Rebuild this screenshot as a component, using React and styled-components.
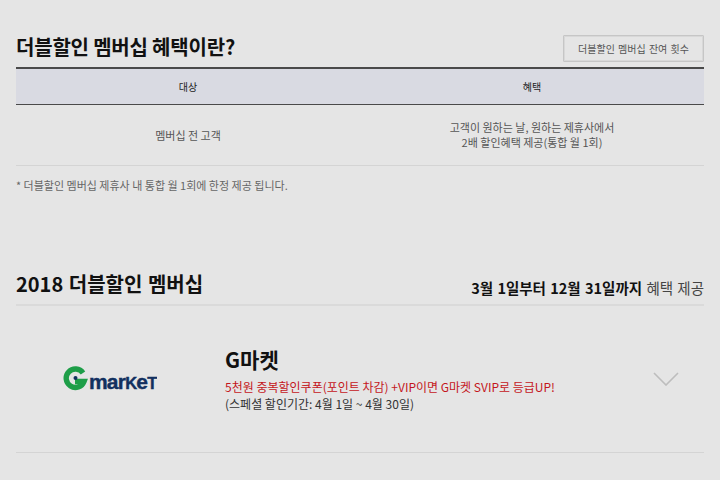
import React from 'react';
import styled, { createGlobalStyle } from 'styled-components';

const GlobalStyle = createGlobalStyle`
  html, body {
    margin: 0;
    padding: 0;
    background: #e5e5e5;
    overflow: hidden;
  }
  body {
    font-family: 'Noto Sans CJK KR', 'Liberation Sans', sans-serif;
  }
`;

const Page = styled.div`
  width: 688px;
  height: 480px;
  padding: 0 16px;
  overflow: hidden;
`;

const TitleRow = styled.div`
  display: flex;
  justify-content: space-between;
  align-items: flex-end;
  height: 62px;
  margin-bottom: 5px;
`;

const Title = styled.h2`
  margin: 0 0 2px;
  font-size: 20px;
  line-height: 26px;
  font-weight: 700;
  color: #111;
  letter-spacing: -0.2px;
`;

const OutlineButton = styled.button`
  box-sizing: border-box;
  width: 141px;
  height: 27px;
  padding: 0;
  background: #e5e5e5;
  border: 1px solid #c6c6c6;
  border-radius: 1px;
  box-shadow: inset 0 0 0 1px #d8d8d8;
  color: #555;
  font-family: inherit;
  font-size: 10px;
  word-spacing: 1px;
`;

const Table = styled.div`
  display: grid;
  grid-template-columns: 344px 344px;
  border-top: 2px solid #4a4a4a;
`;

const HeadCell = styled.div`
  height: 35px;
  display: flex;
  align-items: center;
  justify-content: center;
  background: #d9dae2;
  border-bottom: 1px solid #4a4a4a;
  font-size: 10px;
  color: #222;
`;

const BodyCell = styled.div`
  height: 60px;
  display: flex;
  align-items: center;
  justify-content: center;
  text-align: center;
  border-bottom: 1px solid #d4d4d4;
  font-size: 11px;
  line-height: 15px;
  color: #555;
`;

const Note = styled.p`
  margin: 12px 0 0;
  font-size: 11px;
  line-height: 15px;
  color: #666;
`;

const SectionRow = styled.div`
  display: flex;
  justify-content: space-between;
  align-items: center;
  margin-top: 70px;
  height: 41px;
  border-bottom: 2px solid #dadada;
`;

const SectionTitle = styled.h3`
  margin: 0;
  font-size: 20px;
  font-weight: 700;
  word-spacing: 1px;
  color: #111;
  line-height: 26px;
`;

const Period = styled.div`
  font-size: 14.5px;
  word-spacing: 1px;
  color: #444;
  margin-top: 7px;
  strong {
    color: #111;
    font-weight: 700;
  }
`;

const Partner = styled.div`
  display: flex;
  align-items: center;
  height: 146px;
  border-bottom: 1px solid #d4d4d4;
`;

const LogoBox = styled.div`
  width: 188px;
  margin-right: 21px;
  display: flex;
  justify-content: center;
  flex: none;
`;

const PartnerInfo = styled.div`
  flex: 1;
  padding-bottom: 2px;
`;

const PartnerName = styled.div`
  font-size: 21px;
  line-height: 28px;
  font-weight: 700;
  color: #111;
  margin-bottom: 5px;
`;

const Promo = styled.div`
  font-size: 12px;
  line-height: 17px;
  color: #c4161c;
`;

const Dates = styled.div`
  font-size: 12px;
  line-height: 17px;
  color: #333;
`;

const ChevronBox = styled.div`
  width: 76px;
  flex: none;
  display: flex;
  justify-content: center;
`;

function GmarketLogo() {
  return (
    <svg width="94" height="36" viewBox="0 -6 94 36">
      <path
        d="M20 6 A9.2 9.2 0 1 0 21 14.5 L12 14.5"
        fill="none"
        stroke="#1e9e48"
        strokeWidth="5.4"
      />
      <circle cx="12.5" cy="11" r="2" fill="#12305f" />
      <text
        x="26"
        y="22"
        fontFamily="'Liberation Sans', sans-serif"
        fontWeight="700"
        fontSize="21"
        letterSpacing="-0.8"
        stroke="#12305f"
        strokeWidth="0.4"
        fill="#12305f"
      >
        mar<tspan fontSize="16.5">K</tspan>e<tspan fontSize="16.5">T</tspan>
      </text>
    </svg>
  );
}

function Chevron() {
  return (
    <svg width="26" height="14" viewBox="0 0 26 14">
      <path d="M1 1 L13 13 L25 1" fill="none" stroke="#bdbdbd" strokeWidth="1.6" />
    </svg>
  );
}

export default function App() {
  return (
    <Page>
      <GlobalStyle />
      <TitleRow>
        <Title>더블할인 멤버십 혜택이란?</Title>
        <OutlineButton>더블할인 멤버십 잔여 횟수</OutlineButton>
      </TitleRow>
      <Table>
        <HeadCell>대상</HeadCell>
        <HeadCell>혜택</HeadCell>
        <BodyCell>멤버십 전 고객</BodyCell>
        <BodyCell>
          고객이 원하는 날, 원하는 제휴사에서
          <br />
          2배 할인혜택 제공(통합 월 1회)
        </BodyCell>
      </Table>
      <Note>* 더블할인 멤버십 제휴사 내 통합 월 1회에 한정 제공 됩니다.</Note>
      <SectionRow>
        <SectionTitle>2018 더블할인 멤버십</SectionTitle>
        <Period>
          <strong>3월 1일부터 12월 31일까지</strong> 혜택 제공
        </Period>
      </SectionRow>
      <Partner>
        <LogoBox>
          <GmarketLogo />
        </LogoBox>
        <PartnerInfo>
          <PartnerName>G마켓</PartnerName>
          <Promo>5천원 중복할인쿠폰(포인트 차감) +VIP이면 G마켓 SVIP로 등급UP!</Promo>
          <Dates>(스페셜 할인기간: 4월 1일 ~ 4월 30일)</Dates>
        </PartnerInfo>
        <ChevronBox>
          <Chevron />
        </ChevronBox>
      </Partner>
    </Page>
  );
}
